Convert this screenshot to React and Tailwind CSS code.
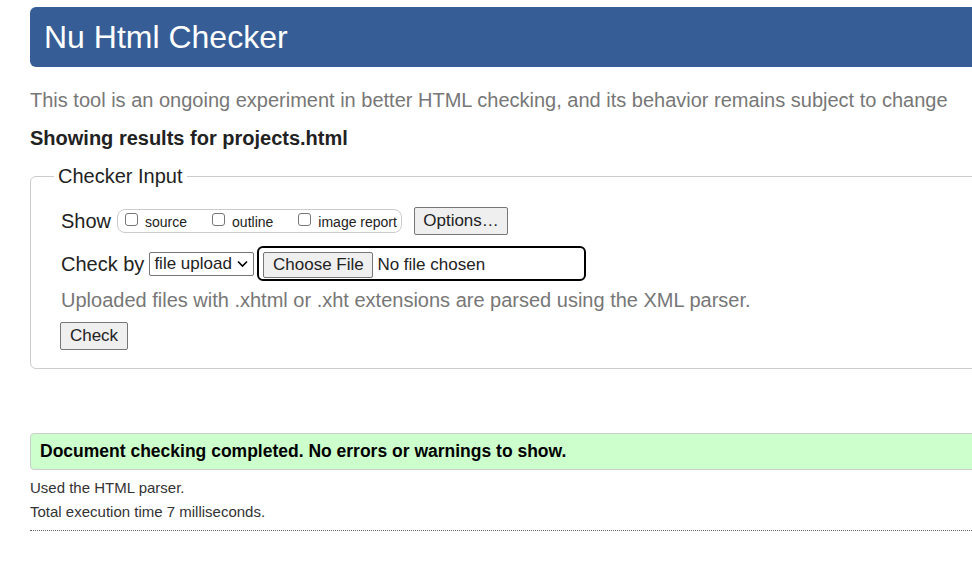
import React from "react";

function Box() {
  return <span className="inline-block w-[13px] h-[13px] border border-[#767676] rounded-[3px] bg-white mr-[7px] -translate-y-[3px]" />;
}

export default function App() {
  return (
    <div className="w-[972px] h-[564px] overflow-hidden bg-white text-[#222] font-['Liberation_Sans',Arial,sans-serif]">
      <div className="ml-[30px] w-[1100px] pt-[7px]">
        {/* header */}
        <div className="h-[60px] bg-[#365d95] rounded-l-[6px] flex items-center pl-[14px]">
          <h1 className="text-[32px] text-white leading-none">Nu Html Checker</h1>
        </div>

        <p className="mt-[21px] text-[20px] leading-[24px] text-[#777]">
          This tool is an ongoing experiment in better HTML checking, and its behavior remains subject to change
        </p>
        <p className="mt-[14px] text-[20px] leading-[24px] font-bold text-[#222]">Showing results for projects.html</p>

        {/* checker input */}
        <div className="relative mt-[26px] border border-[#ccc] rounded-l-[6px] h-[193px] pl-[30px] pt-[30px]">
          <span className="absolute left-[23px] -top-[13px] bg-white px-[4px] text-[20px] leading-[24px]">Checker Input</span>

          <div className="flex items-center text-[20px] leading-[24px]">
            <span>Show</span>
            <div className="ml-[6px] h-[24px] w-[285px] border border-[#ccc] rounded-[8px] flex items-center text-[14px] pl-[7px]">
              <span className="flex items-center translate-y-[1px]"><Box />source</span>
              <span className="flex items-center translate-y-[1px] ml-[25px]"><Box />outline</span>
              <span className="flex items-center translate-y-[1px] ml-[25px]"><Box />image report</span>
            </div>
            <span className="ml-[12px] h-[28px] w-[94px] border border-[#767676] rounded-[2px] bg-[#efefef] text-[17px] flex items-center justify-center">Options…</span>
          </div>

          <div className="flex items-center mt-[11px] text-[20px] leading-[24px]">
            <span>Check by</span>
            <span className="ml-[5px] h-[24px] w-[105px] border border-[#767676] rounded-[2px] bg-white text-[17px] flex items-center pl-[4px]">
              file upload
              <svg width="11" height="8" viewBox="0 0 11 8" className="ml-[5px]"><path d="M1 1.5 L5.5 6 L10 1.5" fill="none" stroke="#000" strokeWidth="1.6" /></svg>
            </span>
            <span className="ml-[3px] h-[35px] w-[329px] border-2 border-black rounded-[6px] flex items-center pl-[4px] text-[17px]">
              <span className="h-[26px] w-[110px] border border-[#767676] rounded-[2px] bg-[#efefef] flex items-center justify-center translate-y-[1px]">Choose File</span>
              <span className="ml-[4px] translate-y-[1px]">No file chosen</span>
            </span>
          </div>

          <p className="mt-[7px] text-[20px] leading-[24px] text-[#777]">
            Uploaded files with .xhtml or .xht extensions are parsed using the XML parser.
          </p>
          <span className="mt-[10px] h-[28px] w-[68px] border border-[#767676] rounded-[2px] bg-[#efefef] text-[17px] flex items-center justify-center -ml-[1px]">Check</span>
        </div>

        {/* result */}
        <div className="mt-[64px] h-[37px] bg-[#ccffcc] border border-[#ccc] rounded-l-[4px] flex items-center pl-[9px]">
          <span className="text-[17.5px] font-bold text-black">Document checking completed. No errors or warnings to show.</span>
        </div>
        <p className="mt-[9px] text-[15px] leading-[18px] text-[#333]">Used the HTML parser.</p>
        <p className="mt-[6px] text-[15px] leading-[18px] text-[#333]">Total execution time 7 milliseconds.</p>
        <div className="mt-[9px] border-t border-dotted border-[#666]" />
      </div>
    </div>
  );
}
